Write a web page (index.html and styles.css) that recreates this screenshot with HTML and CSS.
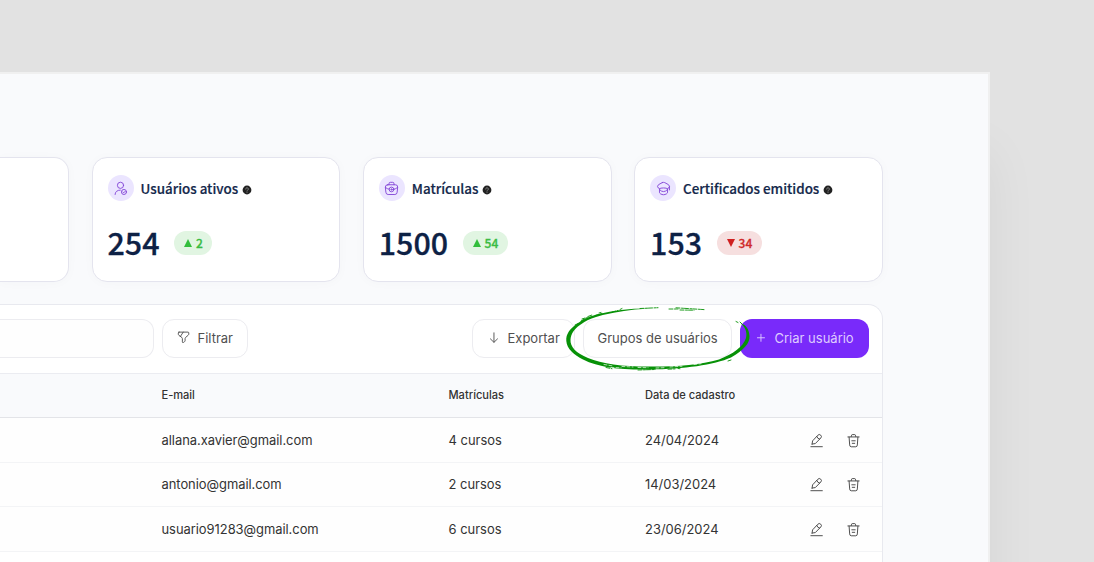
FILE: index.html
```html
<!DOCTYPE html>
<html lang="pt-BR">
<head>
    <meta charset="UTF-8">
    <title>Usuários</title>
    <link rel="stylesheet" href="styles.css">
</head>
<body>
    <svg class="sprite">
        <symbol id="icon-help" viewBox="0 0 10 10">
            <circle cx="5" cy="5" r="4.4" fill="#222" stroke="none"/>
            <path d="M3.7 4.1a1.3 1.3 0 1 1 1.9 1.1q-.6.3-.6.7M5 7.1v.3" fill="none" stroke="#999" stroke-width=".8"/>
        </symbol>
        <symbol id="icon-edit" viewBox="0 0 16 16">
            <path d="M2 14.600h12.200M3.300 11.800l.5-3.400 5.600-6a1.900 1.900 0 0 1 3.200 2.900l-5.900 6-3.400.5zM8.300 3.700q.6 2.400 3 2.900"/>
        </symbol>
        <symbol id="icon-trash" viewBox="0 0 16 16">
            <path d="M2 4.200h12M5.500 3.900l.5-1.600q.1-.6.700-.6h2.600q.6 0 .7.600l.5 1.600M3.300 4.400l.6 8.300q.1 2 1.700 2h4.800q1.600 0 1.700-2l.6-8.300M6.200 8.300h3.600M6.700 11h2.600"/>
        </symbol>
    </svg>

    <div class="window">
        <div class="stats">
            <div class="card card-cut"></div>
            <div class="card">
                <div class="card-title">
                    <span class="card-icon">
                        <svg viewBox="0 0 16 16"><circle cx="8" cy="4.600" r="3.300"/><path d="M2.200 14.400c0-3 2.400-4.700 5.600-4.700"/><circle cx="11.700" cy="11.700" r="2.700"/><path d="M10.500 11.700l.9.900 1.600-1.600"/></svg>
                    </span>
                    <h3>Usuários ativos</h3>
                    <svg class="help"><use href="#icon-help"/></svg>
                </div>
                <div class="card-value">
                    <strong>254</strong>
                    <span class="badge up"><i></i>2</span>
                </div>
            </div>
            <div class="card">
                <div class="card-title">
                    <span class="card-icon">
                        <svg viewBox="0 0 16 16"><path d="M5.300 4V3q0-1.600 1.400-1.600h2.600Q10.700 1.400 10.700 3v1M4 4h8q2.700 0 2.600 2.500l-.6 5.500q-.2 2.400-2.400 2.400H4.400Q2.200 14.400 2 12l-.6-5.500Q1.300 4 4 4zM1.600 7q2 1.500 4 1.800M14.400 7q-2 1.500-4 1.800"/><circle cx="8" cy="9" r="2.500"/><circle cx="8" cy="9" r=".7"/></svg>
                    </span>
                    <h3>Matrículas</h3>
                    <svg class="help"><use href="#icon-help"/></svg>
                </div>
                <div class="card-value">
                    <strong>1500</strong>
                    <span class="badge up"><i></i>54</span>
                </div>
            </div>
            <div class="card">
                <div class="card-title">
                    <span class="card-icon">
                        <svg viewBox="0 0 16 16"><path d="M6.700 1.700L2.700 3.900Q.6 5.700 2.500 7.500l1.200.8q1-.9 4.300-.9t4.300.9l1.200-.8q1.900-1.800-.2-3.600L9.300 1.700q-1.300-.6-2.600 0zM3.700 8.300v3.700q0 1 1 1.600l1.700.8q1.600.5 3.200 0l1.700-.8q1-.6 1-1.600V8.300M4.200 9.500q1.600 1.800 3.800 1.800t3.800-1.800M14.300 6v3.500"/></svg>
                    </span>
                    <h3>Certificados emitidos</h3>
                    <svg class="help"><use href="#icon-help"/></svg>
                </div>
                <div class="card-value">
                    <strong>153</strong>
                    <span class="badge down"><i></i>34</span>
                </div>
            </div>
        </div>

        <div class="panel">
            <div class="toolbar">
                <div class="search"></div>
                <button class="btn filter-btn">
                    <svg viewBox="0 0 14 14"><path d="M2.200 1.200h9.600q.9 0 .9.900v1.100q0 .8-.7 1.400L9.200 7q-.5.500-.5 1.200v2.300q0 .6-.5.900l-1.400 1q-1 .4-1-.7V8.200q0-.6-.4-1.100L2 4.600q-.6-.6-.6-1.300V2.100q0-.9.800-.9zM6.700 1.200L3.500 6.100"/></svg>
                    Filtrar
                </button>
                <button class="btn export-btn">
                    <svg viewBox="0 0 14 14"><path d="M7.500 2v10M3.700 8.500L7.500 12.200l3.800-3.700"/></svg>
                    Exportar
                </button>
                <button class="btn groups-btn">Grupos de usuários</button>
                <button class="btn create-btn">
                    <svg viewBox="0 0 14 14"><path d="M7.500 3.500v7.600M3.700 7.300h7.600"/></svg>
                    Criar usuário
                </button>
                <svg class="marker" viewBox="560 300 195 75">
                    <path class="ink" d="M576 324.500C570 329 565.700 334 566.300 341C567 349 574 355 583 359.500C600 368 622 370 650 369.500C684 369 714 365 731 357.500C744 350 750 343 749.500 336C749 329 746 325 741 323.500C745 327 747.500 332 746 338C743 347 733 354 719 359.500C700 365 675 366.800 648 366.500C622 366.500 602 364 588 358C576 353 570 347 570.500 339.500C571 334 574 329 580 325Q587 319.500 596 317Q612 312 635 309.500L650 308.500L634 308.800Q607 311 590 316.500Q582 319.500 576 324.500z"/>
                    <path class="rough" d="M575 325l3-1.500M581 321l7-4M582 319l3-1M588 316.500l4-1.500M595 315.500l7-2M599 313l2-.5M612 312l6-1.500M620 309.500l2-1M640 308.500l18-.8M669 309h9M676 307.800l28 1.800M680 310l14 .2M736 321.500l2 1M740 322l2 2M728 361l3-1"/>
                    <path class="scratch" d="M604 364.500l9 1.500M611 367.500l10 .3M622 366.500l11 .5M638 367.500l10 .2M656 368l8-.3M670 367l12-.8M694 364.500l7-.8"/>
                    <path class="rough" d="M606 367.500l6 1.200M638 370l17-.5M668 369.200l7-.3M678 368.500l2 .2"/>
                </svg>
            </div>
            <div class="row head">
                <span>E-mail</span>
                <span>Matrículas</span>
                <span>Data de cadastro</span>
            </div>
            <div class="row">
                <span>allana.xavier@gmail.com</span>
                <span>4 cursos</span>
                <span>24/04/2024</span>
                <svg class="action"><use href="#icon-edit"/></svg>
                <svg class="action"><use href="#icon-trash"/></svg>
            </div>
            <div class="row">
                <span>antonio@gmail.com</span>
                <span>2 cursos</span>
                <span>14/03/2024</span>
                <svg class="action"><use href="#icon-edit"/></svg>
                <svg class="action"><use href="#icon-trash"/></svg>
            </div>
            <div class="row">
                <span>usuario91283@gmail.com</span>
                <span>6 cursos</span>
                <span>23/06/2024</span>
                <svg class="action"><use href="#icon-edit"/></svg>
                <svg class="action"><use href="#icon-trash"/></svg>
            </div>
        </div>
    </div>
</body>
</html>
```
FILE: styles.css
```css
* {
    box-sizing: border-box;
}

body {
    margin: 0;
    height: 562px;
    padding-top: 72px;
    overflow: hidden;
    background: #e2e2e2;
    font-family: Inter, sans-serif;
    color: #333;
}

svg {
    fill: none;
    stroke: currentColor;
    stroke-linecap: round;
    stroke-linejoin: round;
    flex-shrink: 0;
}

.sprite {
    display: none;
}

.window {
    width: 990px;
    height: 490px;
    padding-top: 83px;
    border-top: 2px solid #f0f0f0;
    border-right: 2px solid #f0f0f0;
    background: #f9fafc;
    box-shadow: 0 80px 50px rgba(0, 0, 0, 0.06);
}

/* cards */
.stats {
    display: flex;
    gap: 22.500px;
}

.card {
    width: 248.800px;
    height: 125px;
    padding: 17px 15px;
    border: 1px solid #e4e4ee;
    border-radius: 15px;
    background: #fff;
    box-shadow: 0 1px 12px rgba(30, 40, 80, 0.025);
}

.card-cut {
    width: 69px;
    border-left: none;
    border-radius: 0 15px 15px 0;
}

.card-title {
    display: flex;
    align-items: center;
    height: 26px;
}

.card-icon {
    display: flex;
    align-items: center;
    justify-content: center;
    width: 26px;
    height: 26px;
    margin-right: 7px;
    border-radius: 50%;
    background: #ebe5ff;
    color: #8448d8;
}

.card-icon svg {
    width: 15px;
    height: 15px;
}

h3 {
    margin: 0;
    font: 500 13.400px/26px "Noto Sans CJK JP", sans-serif;
    -webkit-text-stroke: 0.2px;
    color: #14284b;
}

.help {
    width: 10px;
    height: 10px;
    margin: 3px 0 0 4px;
}

.card-value {
    display: flex;
    align-items: center;
    height: 44px;
    margin-top: 20px;
    gap: 15px;
}

.card-value strong {
    margin-top: -3px;
    font: 500 30.400px/44px "Noto Sans CJK JP", sans-serif;
    -webkit-text-stroke: 0.3px;
    color: #0d2145;
}

.badge {
    display: flex;
    align-items: center;
    gap: 4px;
    height: 24px;
    margin-top: -1px;
    padding: 0 9.500px;
    border-radius: 12px;
    font: 500 12px/22px "Noto Sans CJK JP", sans-serif;
    -webkit-text-stroke: 0.3px;
}

.badge i {
    border: 4.500px solid transparent;
}

.up {
    background: #e1f5e2;
    color: #3abc43;
}

.up i {
    border-top: none;
    border-bottom: 8px solid #32be3c;
}

.down {
    background: #f6dfdf;
    color: #cf2929;
}

.down i {
    border-bottom: none;
    border-top: 8px solid #cf2020;
}

/* table */
.panel {
    width: 883px;
    height: 258px;
    margin-top: 22px;
    border-top: 1px solid #e8e9ef;
    border-right: 1px solid #e8e9ef;
    border-top-right-radius: 15px;
    background: #fff;
}

.toolbar {
    position: relative;
    display: flex;
    height: 68.500px;
    padding: 13.500px 13.500px 0 0;
    border-bottom: 1px solid #ebecf1;
}

.search {
    width: 154px;
    height: 39px;
    margin-right: 7.500px;
    border: 1px solid #ececf0;
    border-left: none;
    border-radius: 0 12px 12px 0;
    background: #fefefe;
}

.btn {
    display: flex;
    align-items: center;
    height: 39px;
    padding: 0 14px 1px;
    border: 1px solid #ececf0;
    border-radius: 12px;
    background: #fff;
    font: 13px Inter, sans-serif;
    color: #505050;
    white-space: nowrap;
}

.btn svg {
    width: 13px;
    height: 13px;
    margin-right: 8px;
}

.filter-btn {
    width: 86.500px;
}

.export-btn {
    width: 103px;
    margin-left: auto;
}

.groups-btn {
    width: 149px;
    margin-left: 8px;
}

.create-btn {
    width: 129px;
    margin-left: 8px;
    border: none;
    background: #792afa;
    color: #dfccff;
}

.marker {
    position: absolute;
    left: 560px;
    top: -5px;
    width: 195px;
    height: 75px;
}

.ink {
    fill: #079107;
    stroke: none;
}

.rough {
    stroke: #079107;
    stroke-width: 0.9;
    stroke-dasharray: 4 1.5 2 1;
}

.scratch {
    stroke: #fff;
    stroke-width: 0.7;
    stroke-dasharray: 3 2;
}

.row {
    display: grid;
    grid-template-columns: 287px 196.500px 163.500px 37px 16px;
    align-items: center;
    height: 44.600px;
    padding-left: 161.500px;
    border-bottom: 1px solid #f3f4f6;
    background: #fefefe;
    font-size: 12.950px;
}

.row span:first-child {
    letter-spacing: -0.04px;
}

.head {
    height: 44.500px;
    border-bottom-color: #e3e4e8;
    background: #f9fafc;
    font-size: 11.100px;
    font-weight: 500;
}

.action {
    width: 15px;
    height: 15px;
    margin-top: 1px;
    color: #444;
}
```
